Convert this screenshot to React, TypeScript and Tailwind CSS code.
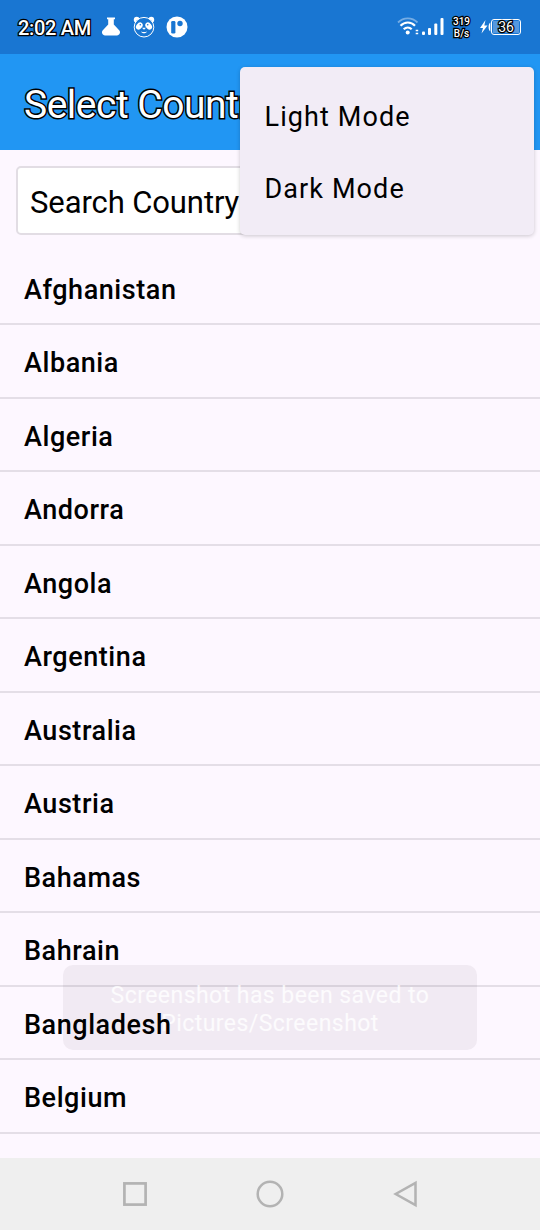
const countries = [
  "Afghanistan",
  "Albania",
  "Algeria",
  "Andorra",
  "Angola",
  "Argentina",
  "Australia",
  "Austria",
  "Bahamas",
  "Bahrain",
  "Bangladesh",
  "Belgium",
];

function StatusBar() {
  return (
    <div className="flex h-[54px] shrink-0 items-center bg-[#1976d2] pl-[18px] pr-[19px] text-white">
      <span className="w-[83px] whitespace-nowrap pt-[2px] text-[20px] font-medium leading-none tracking-[-0.300px] [-webkit-text-stroke:2.600px_#000] [paint-order:stroke_fill]">
        2:02 AM
      </span>

      {/* Flask */}
      <svg width="20" height="20" viewBox="0 0 20 20" fill="white">
        <path d="M6 .5h8v1.700h-1.200v5.300l5.600 6c1.400 1.800.3 4.600-2.400 4.900H4c-2.700-.3-3.800-3.100-2.400-4.900l5.600-6V2.200H6z" />
      </svg>

      {/* Panda */}
      <svg width="22" height="22" viewBox="0 0 22 22" className="ml-[11.500px]" fill="white">
        <circle cx="3.700" cy="3.700" r="2.900" />
        <circle cx="18.300" cy="3.700" r="2.900" />
        <circle cx="11" cy="11.200" r="9.800" fill="#1976d2" stroke="white" strokeWidth="1" />
        <ellipse cx="6.300" cy="10" rx="3.900" ry="2.900" transform="rotate(-50 6.300 10)" />
        <ellipse cx="15.700" cy="10" rx="3.900" ry="2.900" transform="rotate(50 15.700 10)" />
        <circle cx="7.300" cy="8.800" r=".8" fill="#1976d2" />
        <circle cx="14.700" cy="8.800" r=".8" fill="#1976d2" />
        <path d="M9 11.800h4l-2 2zM8 15.500c2 .7 4 .7 6 0-.8 2.400-5.200 2.400-6 0z" />
      </svg>

      {/* Round badge */}
      <svg width="22" height="22" viewBox="0 0 22 22" className="ml-[11px]">
        <circle cx="11" cy="11" r="10.500" fill="white" />
        <rect x="5.200" y="5" width="4.200" height="12.500" rx="1.300" fill="#1976d2" />
        <circle cx="14" cy="7.500" r="2.700" fill="#1976d2" />
      </svg>

      {/* Wifi */}
      <svg width="23" height="20" viewBox="0 0 23 20" className="ml-auto" fill="none" stroke="white">
        <path d="M1 5.500c5.500-5.500 14-5.500 19.500 0" strokeWidth="1.800" opacity=".4" />
        <path d="M3.500 8.700c4.300-4.300 10.500-4.300 14.500 0M6.700 12.200c2.500-2.300 5.700-2.300 8 0" strokeWidth="2.200" />
        <circle cx="10.700" cy="15.500" r="2" fill="white" stroke="none" />
        <path d="M18.700 13.500h2.500M18.700 16.500h2.500" strokeWidth="1.500" />
      </svg>
      {/* Signal */}
      <svg width="22" height="18" viewBox="0 0 22 18" className="ml-[2px]" fill="white">
        <rect x="0" y="13.500" width="3" height="3.500" rx="1" />
        <rect x="6" y="10" width="3" height="7" rx="1" />
        <rect x="12.300" y="5.500" width="3" height="11.500" rx="1" />
        <rect x="18.500" y="0" width="3" height="17" rx="1" />
      </svg>

      <div className="ml-[8.500px] w-[18px] pt-[2px] text-center text-[10px] font-medium leading-[12px] [-webkit-text-stroke:2.500px_#000] [paint-order:stroke_fill]">
        <div>319</div>
        <div>B/s</div>
      </div>

      {/* Battery */}
      <svg width="11" height="16" viewBox="0 0 11 16" className="ml-[9.500px]" fill="white">
        <path d="M5.500 1 0 9h3L1.500 14.500 7.500 6.500H4.300z" />
        <path d="M10.300 3.500C8 4.500 8 11.500 10.300 12.500z" />
      </svg>
      <div className="flex h-[16px] w-[30px] items-center justify-center rounded-[3px] border-[1.500px] border-white bg-[#1976d2] p-px text-[14px] leading-none">
        <div className="flex h-full w-full items-center justify-center bg-[#5598de]">
          <span className="[-webkit-text-stroke:2.600px_#000] [paint-order:stroke_fill]">36</span>
        </div>
      </div>
    </div>
  );
}

function AppBar() {
  return (
    <header className="flex h-24 shrink-0 items-center bg-[#2196f3] px-6 pt-[7px]">
      <h1 className="whitespace-nowrap text-[39px] leading-none tracking-[-0.500px] text-white [-webkit-text-stroke:3px_#000] [paint-order:stroke_fill]">
        Select Country
      </h1>
    </header>
  );
}

function ModeMenu() {
  return (
    <div className="absolute top-[67px] left-[240px] flex h-[168px] w-[294px] flex-col rounded-[5px] bg-[#f2ecf6] py-3 text-[27px] tracking-[1.100px] shadow-[0_1px_4px_rgba(0,0,0,0.2)]">
      <button className="flex h-[72px] items-center pt-[5px] pl-[24.500px] text-left">Light Mode</button>
      <button className="flex h-[72px] items-center pt-[5px] pl-[24.500px] text-left">Dark Mode</button>
    </div>
  );
}

function NavBar() {
  return (
    <nav className="flex h-[72px] shrink-0 items-center justify-center gap-[107px] bg-[#efefef]">
      <svg width="28" height="28" viewBox="0 0 28 28" fill="none" stroke="#b3b3b3" strokeWidth="2.700">
        <rect x="3.400" y="3.400" width="21.200" height="21.200" />
      </svg>
      <svg width="28" height="28" viewBox="0 0 28 28" fill="none" stroke="#b3b3b3" strokeWidth="2.500">
        <circle cx="14" cy="14" r="12.300" />
      </svg>
      <svg width="28" height="28" viewBox="0 0 28 28" fill="none" stroke="#b3b3b3" strokeWidth="2.500">
        <path d="M24.500 2.900v22.200L4.700 14z" />
      </svg>
    </nav>
  );
}

export default function App() {
  return (
    <div className="relative flex h-[1230px] w-[540px] flex-col overflow-hidden bg-[#fdf7ff] font-[Roboto,sans-serif] text-black">
      <StatusBar />
      <AppBar />

      <main className="min-h-0 flex-1 overflow-hidden">
        <div className="px-4 pt-4">
          <div className="flex h-[69px] items-center rounded-[5px] border-2 border-[#e2dde4] bg-white pl-3 pt-[3px] text-[31px] leading-none tracking-[-0.100px]">
            Search Country
          </div>
        </div>
        <ul className="mt-[16.500px]">
          {countries.map((name) => (
            <li
              key={name}
              className="flex h-[73.500px] items-center border-b-2 border-[#e4dee7] px-6 pt-[6px] text-[27px] font-medium leading-none tracking-[0.560px]"
            >
              <span className="relative z-10">{name}</span>
            </li>
          ))}
        </ul>
      </main>

      <NavBar />
      <ModeMenu />

      {/* Fading toast */}
      <div className="absolute top-[965px] left-[63px] flex h-[85px] w-[414px] flex-col items-center justify-center rounded-[10px] bg-[#2b1b30]/6 pt-[4px] text-center text-[23px] leading-[28px] tracking-[0.450px] text-white/80">
        <span>Screenshot has been saved to</span>
        <span>Pictures/Screenshot</span>
      </div>
    </div>
  );
}
